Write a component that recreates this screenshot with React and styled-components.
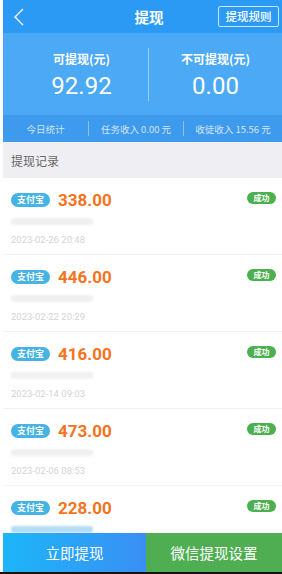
import React from "react";
import styled, { createGlobalStyle } from "styled-components";

const Global = createGlobalStyle`
  html, body { margin: 0; padding: 0; background: #fff; }
  body { font-family: Roboto, "Noto Sans CJK SC", "Noto Sans", sans-serif; }
  * { box-sizing: border-box; }
`;

const Page = styled.div`
  width: 282px;
  height: 574px;
  display: flex;
  flex-direction: column;
  padding-left: 3px;
  background: #fff;
  overflow: hidden;
`;

const TopBar = styled.div`
  height: 33px;
  flex: none;
  background: #2a9af4;
  display: grid;
  grid-template-columns: 1fr auto 1fr;
  align-items: center;
  padding: 0 3px 0 10px;
  color: #fff;
`;

const Back = styled.div`
  display: flex;
  align-items: center;
`;

const Title = styled.div`
  font-size: 14.5px;
  font-weight: 700;
  padding-left: 6px;
  font-family: "Noto Sans CJK SC", sans-serif;
`;

const RuleBtn = styled.div`
  justify-self: end;
  height: 21px;
  width: 61px;
  border: 1px solid rgba(255, 255, 255, 0.75);
  border-radius: 2px;
  font-size: 11.5px;
  line-height: 19px;
  text-align: center;
  font-family: "Noto Sans CJK SC", sans-serif;
  font-weight: 500;
`;

const Summary = styled.div`
  height: 82px;
  flex: none;
  background: #4ba9f6;
  display: grid;
  grid-template-columns: 1fr 1px 1fr;
  align-items: center;
  padding-left: 12px;
  color: #fff;
`;

const SumCol = styled.div`
  display: flex;
  flex-direction: column;
  align-items: center;
  padding-top: 4px;
`;

const SumLabel = styled.div`
  font-size: 12px;
  font-weight: 700;
  line-height: 16px;
  font-family: "Noto Sans CJK SC", sans-serif;
`;

const SumValue = styled.div`
  font-size: 24px;
  font-weight: 400;
  line-height: 30px;
  margin-top: 4px;
  font-family: Roboto, sans-serif;
`;

const VLine = styled.div`
  width: 1px;
  height: 53px;
  background: rgba(255, 255, 255, 0.45);
`;

const Stats = styled.div`
  height: 27px;
  flex: none;
  background: #3d9aec;
  display: grid;
  grid-template-columns: 85px 1px 94px 1px 1fr;
  align-items: center;
  color: rgba(255, 255, 255, 0.78);
  font-size: 9.5px;
  font-family: "Noto Sans CJK SC", sans-serif;
`;

const StatCell = styled.div`
  text-align: center;
`;

const StatDiv = styled.div`
  width: 1px;
  height: 15px;
  background: rgba(255, 255, 255, 0.4);
`;

const Section = styled.div`
  height: 36px;
  flex: none;
  background: #efeff3;
  display: flex;
  align-items: center;
  padding-left: 8px;
  font-size: 12px;
  color: #666;
  font-family: "Noto Sans CJK SC", sans-serif;
`;

const List = styled.div`
  flex: 1;
  overflow: hidden;
`;

const Item = styled.div`
  height: 77px;
  border-bottom: 1px solid #f2f2f4;
  padding: 14px 6px 0 8px;
  display: flex;
  flex-direction: column;
`;

const Row = styled.div`
  height: 16px;
  display: flex;
  align-items: center;
`;

const PayBadge = styled.div`
  width: 39px;
  height: 14px;
  border-radius: 7px;
  background: #45b4e4;
  color: #fff;
  font-size: 9px;
  font-weight: 700;
  line-height: 14px;
  text-align: center;
  font-family: "Noto Sans CJK SC", sans-serif;
`;

const Amount = styled.div`
  margin-left: 8px;
  font-size: 17px;
  font-weight: 700;
  color: #f5731c;
  font-family: Roboto, sans-serif;
`;

const Status = styled.div`
  margin-left: auto;
  width: 29px;
  height: 12px;
  margin-top: -4px;
  border-radius: 6px;
  background: #4caf50;
  color: #fff;
  font-size: 8px;
  font-weight: 700;
  line-height: 12px;
  text-align: center;
  font-family: "Noto Sans CJK SC", sans-serif;
`;

const Redacted = styled.div`
  margin-top: 10px;
  width: 82px;
  height: 7px;
  border-radius: 3px;
  background: ${(p) => (p.$blue ? "#b5dcf4" : "#f0f0f1")};
  filter: blur(1px);
`;

const DateText = styled.div`
  margin-top: 9px;
  font-size: 9.5px;
  line-height: 12px;
  color: #d4d4d4;
  font-family: Roboto, sans-serif;
`;

const Bottom = styled.div`
  height: 39px;
  flex: none;
  display: grid;
  grid-template-columns: 143px 1fr;
  margin-left: -3px;
  padding-left: 3px;
  background: #fff;
`;

const BottomBtn = styled.div`
  display: flex;
  align-items: center;
  justify-content: center;
  color: #fff;
  font-size: 14.5px;
  font-family: "Noto Sans CJK SC", sans-serif;
  background: ${(p) =>
    p.$green ? "#4fae52" : "linear-gradient(90deg, #1cb6f8, #3a8ff4)"};
`;

const BlackBar = styled.div`
  height: 2px;
  flex: none;
  background: #111;
  margin-left: -3px;
`;

const records = [
  { amount: "338.00", date: "2023-02-26 20:48" },
  { amount: "446.00", date: "2023-02-22 20:29" },
  { amount: "416.00", date: "2023-02-14 09:03" },
  { amount: "473.00", date: "2023-02-06 08:53" },
  { amount: "228.00", date: "", blue: true },
];

export default function App() {
  return (
    <>
      <Global />
      <Page>
        <TopBar>
          <Back>
            <svg width="12" height="18" viewBox="0 0 12 18">
              <path d="M10 1 L2 9 L10 17" fill="none" stroke="#fff" strokeWidth="1.4" />
            </svg>
          </Back>
          <Title>提现</Title>
          <RuleBtn>提现规则</RuleBtn>
        </TopBar>
        <Summary>
          <SumCol>
            <SumLabel>可提现(元)</SumLabel>
            <SumValue>92.92</SumValue>
          </SumCol>
          <VLine />
          <SumCol>
            <SumLabel>不可提现(元)</SumLabel>
            <SumValue>0.00</SumValue>
          </SumCol>
        </Summary>
        <Stats>
          <StatCell>今日统计</StatCell>
          <StatDiv />
          <StatCell>任务收入 0.00 元</StatCell>
          <StatDiv />
          <StatCell>收徒收入 15.56 元</StatCell>
        </Stats>
        <Section>提现记录</Section>
        <List>
          {records.map((r, i) => (
            <Item key={i}>
              <Row>
                <PayBadge>支付宝</PayBadge>
                <Amount>{r.amount}</Amount>
                <Status>成功</Status>
              </Row>
              <Redacted $blue={r.blue} />
              <DateText>{r.date}</DateText>
            </Item>
          ))}
        </List>
        <Bottom>
          <BottomBtn>立即提现</BottomBtn>
          <BottomBtn $green>微信提现设置</BottomBtn>
        </Bottom>
        <BlackBar />
      </Page>
    </>
  );
}
